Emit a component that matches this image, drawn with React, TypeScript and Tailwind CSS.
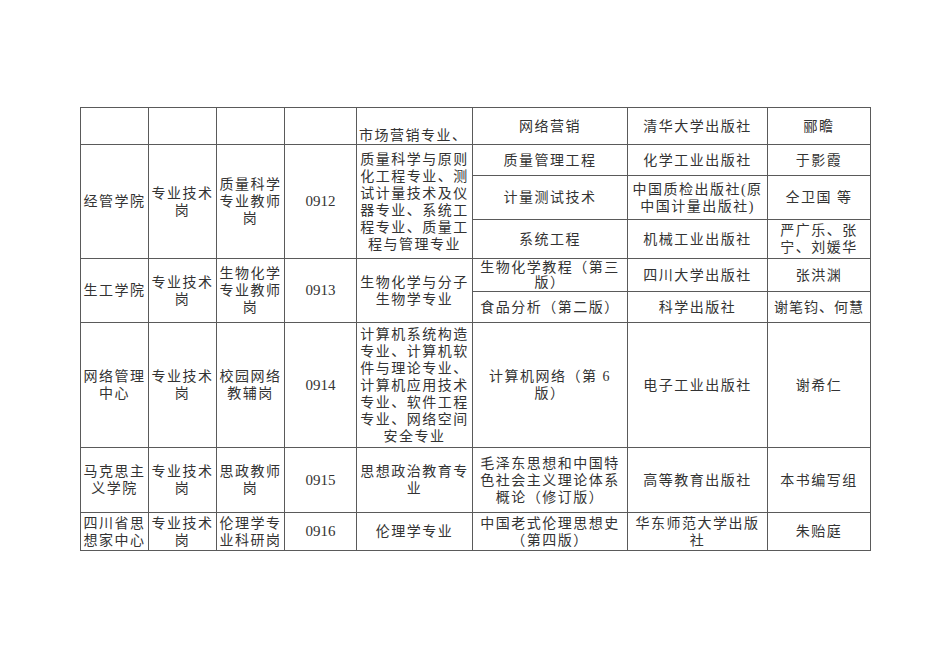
import React from "react";

const font = { fontFamily: '"Liberation Serif", "Noto Sans CJK SC", serif' };

function Td({
  children,
  rowSpan,
  className = "",
}: {
  children?: React.ReactNode;
  rowSpan?: number;
  className?: string;
}) {
  return (
    <td
      rowSpan={rowSpan}
      className={`border border-[#5a5a5a] px-[2px] py-0 text-center align-middle ${className}`}
    >
      {children}
    </td>
  );
}

export default function App() {
  return (
    <div className="min-h-[672px] w-[950px] bg-white pl-[80px] pt-[107px]" style={font}>
      <table className="w-[790px] table-fixed border-collapse text-[14px] leading-[17px] tracking-[1.5px] text-[#333]">
        <colgroup>
          <col className="w-[68px]" />
          <col className="w-[68px]" />
          <col className="w-[68px]" />
          <col className="w-[72px]" />
          <col className="w-[116px]" />
          <col className="w-[155px]" />
          <col className="w-[140px]" />
          <col className="w-[103px]" />
        </colgroup>
        <tbody>
          <tr className="h-[37px]">
            <Td />
            <Td />
            <Td />
            <Td />
            <Td className="!align-bottom !text-left">市场营销专业、</Td>
            <Td>网络营销</Td>
            <Td>清华大学出版社</Td>
            <Td className="!border-l-[#aaa]">郦瞻</Td>
          </tr>

          <tr className="h-[31px]">
            <Td rowSpan={3}>经管学院</Td>
            <Td rowSpan={3}>
              专业技术
              <br />岗
            </Td>
            <Td rowSpan={3}>
              质量科学
              <br />
              专业教师
              <br />岗
            </Td>
            <Td rowSpan={3} className="text-[15px] tracking-normal">
              0912
            </Td>
            <Td rowSpan={3}>
              质量科学与原则
              <br />
              化工程专业、测
              <br />
              试计量技术及仪
              <br />
              器专业、系统工
              <br />
              程专业、质量工
              <br />
              程与管理专业
            </Td>
            <Td>质量管理工程</Td>
            <Td>化学工业出版社</Td>
            <Td className="!border-l-[#aaa]">于影霞</Td>
          </tr>
          <tr className="h-[44px]">
            <Td>计量测试技术</Td>
            <Td>
              中国质检出版社(原
              <br />
              中国计量出版社)
            </Td>
            <Td className="!border-l-[#aaa]">仝卫国 等</Td>
          </tr>
          <tr className="h-[39px]">
            <Td>系统工程</Td>
            <Td>机械工业出版社</Td>
            <Td className="!border-l-[#aaa]">
              严广乐、张
              <br />
              宁、刘媛华
            </Td>
          </tr>

          <tr className="h-[33px]">
            <Td rowSpan={2}>生工学院</Td>
            <Td rowSpan={2}>
              专业技术
              <br />岗
            </Td>
            <Td rowSpan={2}>
              生物化学
              <br />
              专业教师
              <br />岗
            </Td>
            <Td rowSpan={2} className="text-[15px] tracking-normal">
              0913
            </Td>
            <Td rowSpan={2}>
              生物化学与分子
              <br />
              生物学专业
            </Td>
            <Td className="!leading-[15.5px]">
              生物化学教程（第三
              <br />
              版）
            </Td>
            <Td>四川大学出版社</Td>
            <Td className="!border-l-[#aaa]">张洪渊</Td>
          </tr>
          <tr className="h-[31px]">
            <Td>食品分析（第二版）</Td>
            <Td>科学出版社</Td>
            <Td className="!border-l-[#aaa] !tracking-[1px]">谢笔钧、何慧</Td>
          </tr>

          <tr className="h-[125px]">
            <Td>
              网络管理
              <br />
              中心
            </Td>
            <Td>
              专业技术
              <br />岗
            </Td>
            <Td>
              校园网络
              <br />
              教辅岗
            </Td>
            <Td className="text-[15px] tracking-normal">0914</Td>
            <Td>
              计算机系统构造
              <br />
              专业、计算机软
              <br />
              件与理论专业、
              <br />
              计算机应用技术
              <br />
              专业、软件工程
              <br />
              专业、网络空间
              <br />
              安全专业
            </Td>
            <Td>
              计算机网络（第 6
              <br />
              版）
            </Td>
            <Td>电子工业出版社</Td>
            <Td className="!border-l-[#aaa]">谢希仁</Td>
          </tr>

          <tr className="h-[65px]">
            <Td>
              马克思主
              <br />
              义学院
            </Td>
            <Td>
              专业技术
              <br />岗
            </Td>
            <Td>
              思政教师
              <br />岗
            </Td>
            <Td className="text-[15px] tracking-normal">0915</Td>
            <Td>
              思想政治教育专
              <br />业
            </Td>
            <Td>
              毛泽东思想和中国特
              <br />
              色社会主义理论体系
              <br />
              概论（修订版）
            </Td>
            <Td>高等教育出版社</Td>
            <Td className="!border-l-[#aaa]">本书编写组</Td>
          </tr>

          <tr className="h-[38px]">
            <Td>
              四川省思
              <br />
              想家中心
            </Td>
            <Td>
              专业技术
              <br />岗
            </Td>
            <Td>
              伦理学专
              <br />
              业科研岗
            </Td>
            <Td className="text-[15px] tracking-normal">0916</Td>
            <Td>伦理学专业</Td>
            <Td>
              中国老式伦理思想史
              <br />
              （第四版）
            </Td>
            <Td>
              华东师范大学出版
              <br />社
            </Td>
            <Td className="!border-l-[#aaa]">朱贻庭</Td>
          </tr>
        </tbody>
      </table>
    </div>
  );
}
